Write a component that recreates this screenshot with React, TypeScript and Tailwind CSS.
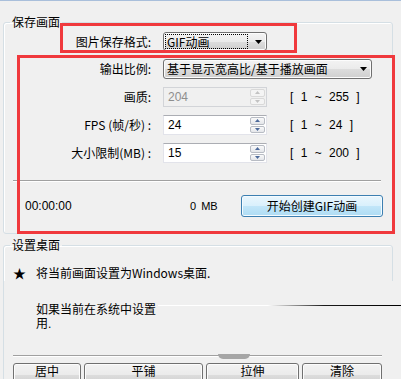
import React from "react";

const grayGrad =
  "bg-[linear-gradient(#f3f3f3_0%,#ebebeb_50%,#dddddd_50%,#cfcfcf_100%)] shadow-[inset_0_0_0_1px_#fcfcfc]";

function Arrow() {
  return (
    <svg width="7" height="4" viewBox="0 0 7 4" className="shrink-0">
      <path d="M0 0h7L3.5 4z" fill="#000" />
    </svg>
  );
}

function SpinBtn({ up, disabled }: { up?: boolean; disabled?: boolean }) {
  const c = disabled ? "#c2c2c2" : "#4d6a9a";
  return (
    <div
      className={`flex flex-1 items-center justify-center rounded-[2px] border ${
        disabled ? "border-[#d9d9d9] bg-[#f4f4f4]" : "border-[#b8bcc4] bg-[linear-gradient(#fafafa,#e4e6ea)]"
      }`}
    >
      <svg width="5" height="3" viewBox="0 0 5 3">
        {up ? <path d="M0 3h5L2.5 0z" fill={c} /> : <path d="M0 0h5L2.5 3z" fill={c} />}
      </svg>
    </div>
  );
}

function Spin({ value, disabled }: { value: string; disabled?: boolean }) {
  return (
    <div
      className={`flex h-[20px] w-[104px] items-stretch border ${
        disabled
          ? "border-[#d2d4d8] bg-[#f0f0f0] text-[#8e8e8e]"
          : "border-[#e2e3ea] border-t-[#abadb3] bg-white text-black"
      }`}
    >
      <span className="flex-1 pl-[4px] font-['Liberation_Sans',sans-serif] text-[12px] leading-[18px]">{value}</span>
      <div className="flex w-[16px] flex-col gap-px py-px pr-px">
        <SpinBtn up disabled={disabled} />
        <SpinBtn disabled={disabled} />
      </div>
    </div>
  );
}

function Range({ text }: { text: string }) {
  return (
    <span className="ml-[23px] whitespace-pre font-['Liberation_Sans',sans-serif] text-[12px] leading-[20px] [word-spacing:4px]">
      {text}
    </span>
  );
}

function Label({ children }: { children: React.ReactNode }) {
  return <div className="w-[147px] shrink-0 text-right leading-[20px]">{children}</div>;
}

function Btn({ className, children }: { className: string; children: React.ReactNode }) {
  return (
    <div
      className={`flex h-[23px] shrink-0 items-start justify-center rounded-[3px] border border-[#707070] pt-[1px] font-['Liberation_Sans','Noto_Sans_CJK_SC',sans-serif] leading-[14px] ${grayGrad} ${className}`}
    >
      {children}
    </div>
  );
}

export default function App() {
  return (
    <div className="relative h-[379px] w-[401px] overflow-hidden bg-[#f0f0f0] font-['Noto_Sans_CJK_SC','Noto_Sans',sans-serif] text-[12px] text-black">
      <div className="flex flex-col">
        <div className="h-px w-full bg-[#a9bfdb]" />

        {/* 保存画面 */}
        <fieldset className="ml-[3px] mt-[13px] w-[390px] rounded-[3px] border border-[#d5dfe5] shadow-[inset_1px_1px_0_#ffffff]">
          <legend className="ml-[6px] px-[2px] leading-[16px]">保存画面</legend>
          <div className="flex flex-col pb-[16px]">
            <div className="mt-[2px] flex h-[19px] items-center">
              <Label>图片保存格式:</Label>
              <div className={`ml-[12px] flex h-[19px] w-[104px] items-center rounded-[3px] border border-[#707070] ${grayGrad}`}>
                <span className="ml-[1px] flex h-[15px] w-[83px] items-center border border-dotted border-black pl-[1px] leading-[13px]">
                  GIF动画
                </span>
                <span className="ml-auto mr-[4px]">
                  <Arrow />
                </span>
              </div>
            </div>

            <div className="mt-[8px] flex h-[20px] items-center">
              <Label>输出比例:</Label>
              <div className={`ml-[12px] flex h-[20px] w-[209px] items-center rounded-[3px] border border-[#707070] pl-[3px] ${grayGrad}`}>
                <span className="leading-[18px]">基于显示宽高比/基于播放画面</span>
                <span className="ml-auto mr-[4px]">
                  <Arrow />
                </span>
              </div>
            </div>

            <div className="mt-[8px] flex h-[20px] items-center">
              <Label>画质:</Label>
              <div className="ml-[12px]">
                <Spin value="204" disabled />
              </div>
              <Range text="[ 1 ~ 255 ]" />
            </div>

            <div className="mt-[8px] flex h-[20px] items-center">
              <Label>FPS (帧/秒) :</Label>
              <div className="ml-[12px]">
                <Spin value="24" />
              </div>
              <Range text="[ 1 ~ 24 ]" />
            </div>

            <div className="mt-[8px] flex h-[20px] items-center">
              <Label>大小限制(MB) :</Label>
              <div className="ml-[12px]">
                <Spin value="15" />
              </div>
              <Range text="[ 1 ~ 200 ]" />
            </div>

            <div className="ml-[9px] mr-[11px] mt-[17px] border-b border-t border-b-white border-t-[#a0a0a0]" />

            <div className="mt-[13px] flex h-[22px] items-center pl-[21px] pr-[9px]">
              <span className="w-[165px] font-['Liberation_Sans',sans-serif] text-[12px]">00:00:00</span>
              <span className="whitespace-pre font-['Liberation_Sans',sans-serif] text-[11px] [word-spacing:2px]">0 MB</span>
              <div className="ml-auto flex h-[22px] w-[142px] items-center justify-center rounded-[3px] border border-[#3c7fb1] bg-[linear-gradient(#eaf6fd_0%,#d9f0fc_50%,#c2e6f9_50%,#aedcf4_100%)] shadow-[inset_0_0_0_1px_#f4fbff]">
                开始创建GIF动画
              </div>
            </div>
          </div>
        </fieldset>

        {/* 设置桌面 */}
        <fieldset className="ml-[3px] mt-[3px] w-[390px] rounded-[3px] border border-[#d5dfe5] shadow-[inset_1px_1px_0_#ffffff]">
          <legend className="ml-[6px] px-[2px] leading-[16px]">设置桌面</legend>
          <div className="flex flex-col">
            <div className="mt-[12px] flex h-[16px] items-center pl-[9px]">
              <span className="w-[23px] text-[13px] leading-[16px]">★</span>
              <span className="leading-[16px]">将当前画面设置为Windows桌面.</span>
            </div>

            <div className="-mr-[10px] flex flex-col bg-[#f0f0f0] pb-[10px]">
              <div className="mt-[22px] flex h-[28px] items-start pl-[32px]">
                <div className="font-['Liberation_Sans','Noto_Sans_CJK_SC',sans-serif] leading-[14px]">
                  如果当前在系统中设置
                  <br />
                  用.
                </div>
                <div className="ml-[2px] mt-[2px] h-px flex-1 bg-[linear-gradient(to_right,#ffffff_0%,#ffffff_45%,#1a1a1a_68%,#000000_100%)]" />
              </div>

              <div className="ml-[9px] mr-[20px] mt-[24px] border-b border-t border-b-white border-t-[#a0a0a0]" />

              <div className="mt-[6px] flex gap-[3px] pl-[9px]">
                <Btn className="w-[68px]">居中</Btn>
                <Btn className="w-[119px]">平铺</Btn>
                <Btn className="w-[93px]">拉伸</Btn>
                <Btn className="w-[80px]">清除</Btn>
              </div>
            </div>
          </div>
        </fieldset>
      </div>

      {/* watermark remnant */}
      <div className="absolute left-[218px] top-[354px] h-[5px] w-[32px] rounded-b-full bg-[#a6a6a6]" />

      {/* red annotation boxes */}
      <div className="absolute left-[60px] top-[23px] h-[30px] w-[237px] border-[3px] border-[#f0393d]" />
      <div className="absolute left-[17px] top-[55px] h-[179px] w-[378px] border-[3px] border-[#f0393d]" />
    </div>
  );
}
